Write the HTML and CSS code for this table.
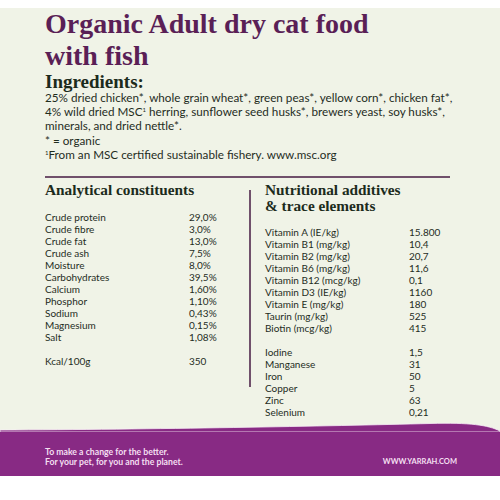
FILE: index.html
```html
<!DOCTYPE html>
<html>
<head>
<meta charset="utf-8">
<link rel="stylesheet" href="styles.css">
</head>
<body>
<div class="page">
  <div class="sheet">
    <h1 class="title">Organic Adult dry cat food<br>with fish</h1>
    <h2 class="ing-title">Ingredients:</h2>
    <p class="ing">25% dried chicken*, whole grain wheat*, green peas*, yellow corn*, chicken fat*,<br>4% wild dried MSC<sup>1</sup> herring, sunflower seed husks*, brewers yeast, soy husks*,<br>minerals, and dried nettle*.<br>* = organic<br><sup>1</sup>From an MSC certified sustainable fishery. www.msc.org</p>
    <div class="rule"></div>
    <div class="cols">
      <div class="col">
        <h3 class="sec">Analytical constituents</h3>
        <div class="table">
          <span>Crude protein</span><span>29,0%</span>
          <span>Crude fibre</span><span>3,0%</span>
          <span>Crude fat</span><span>13,0%</span>
          <span>Crude ash</span><span>7,5%</span>
          <span>Moisture</span><span>8,0%</span>
          <span>Carbohydrates</span><span>39,5%</span>
          <span>Calcium</span><span>1,60%</span>
          <span>Phosphor</span><span>1,10%</span>
          <span>Sodium</span><span>0,43%</span>
          <span>Magnesium</span><span>0,15%</span>
          <span>Salt</span><span>1,08%</span>
          <span class="gap"></span><span class="gap"></span>
          <span>Kcal/100g</span><span>350</span>
        </div>
      </div>
      <div class="vline"></div>
      <div class="col right">
        <h3 class="sec">Nutritional additives<br>&amp; trace elements</h3>
        <div class="table">
          <span>Vitamin A (IE/kg)</span><span>15.800</span>
          <span>Vitamin B1 (mg/kg)</span><span>10,4</span>
          <span>Vitamin B2 (mg/kg)</span><span>20,7</span>
          <span>Vitamin B6 (mg/kg)</span><span>11,6</span>
          <span>Vitamin B12 (mcg/kg)</span><span>0,1</span>
          <span>Vitamin D3 (IE/kg)</span><span>1160</span>
          <span>Vitamin E (mg/kg)</span><span>180</span>
          <span>Taurin (mg/kg)</span><span>525</span>
          <span>Biotin (mcg/kg)</span><span>415</span>
          <span class="gap"></span><span class="gap"></span>
          <span>Iodine</span><span>1,5</span>
          <span>Manganese</span><span>31</span>
          <span>Iron</span><span>50</span>
          <span>Copper</span><span>5</span>
          <span>Zinc</span><span>63</span>
          <span>Selenium</span><span>0,21</span>
        </div>
      </div>
    </div>
  </div>
  <svg class="wave" viewBox="0 0 500 12" preserveAspectRatio="none" width="500" height="12">
    <path d="M0,10 C150,9.5 330,6 430,3.5 C470,2.5 488,5 500,11 L500,12 L0,12 Z" fill="#882a84" stroke="#f7eef6" stroke-width="0.8"/>
  </svg>
  <div class="footer">
    <div class="slogan">To make a change for the better.<br>For your pet, for you and the planet.</div>
    <div class="url">WWW.YARRAH.COM</div>
  </div>
</div>
</body>
</html>
```
FILE: styles.css
```css
html, body {
  margin: 0;
  padding: 0;
  background: #ffffff;
}
.page {
  width: 500px;
  padding-top: 10px;
}
.sheet {
  background: #f0f3e7;
  height: 412px;
  box-sizing: border-box;
  padding: 0 45px;
  color: #1f2d1e;
  font-family: "Lato", "Liberation Sans", sans-serif;
}
.title {
  margin: -2px 0 0;
  font-family: "Liberation Serif", serif;
  font-weight: bold;
  font-size: 28px;
  line-height: 32px;
  color: #5a1f56;
}
.ing-title {
  margin: 1px 0 0;
  font-family: "Liberation Serif", serif;
  font-weight: bold;
  font-size: 19px;
  line-height: 17px;
  color: #1c2b1c;
}
.ing {
  margin: 0;
  font-size: 11.7px;
  line-height: 14.2px;
}
.ing sup {
  font-size: 6px;
  vertical-align: 4px;
  line-height: 0;
}
.rule {
  margin-top: 15px;
  height: 2px;
  width: 405px;
  background: #70506b;
}
.cols {
  display: grid;
  grid-template-columns: 204px 2px 1fr;
}
.sec {
  margin: 4px 0 0;
  font-family: "Liberation Serif", serif;
  font-weight: bold;
  font-size: 15.3px;
  line-height: 16px;
  color: #1c2b1c;
}
.vline {
  margin-top: 12px;
  height: 197px;
  background: #70506b;
}
.right {
  padding-left: 14px;
}
.table {
  margin-top: 13px;
  display: grid;
  grid-template-columns: 144px auto;
  font-size: 10px;
  line-height: 12px;
}
.right .table {
  margin-top: 12px;
}
.gap {
  height: 12px;
}
.wave {
  display: block;
  background: #f0f3e7;
}
.footer {
  background: #882a84;
  height: 44px;
  box-sizing: border-box;
  padding: 15px 43px 0 45px;
  display: flex;
  justify-content: space-between;
  align-items: flex-start;
  color: #f4dff1;
  font-family: "Lato", "Liberation Sans", sans-serif;
  font-weight: bold;
  font-size: 8.7px;
  line-height: 10px;
}
.url {
  margin-top: 10px;
  font-size: 7.5px;
}
```
